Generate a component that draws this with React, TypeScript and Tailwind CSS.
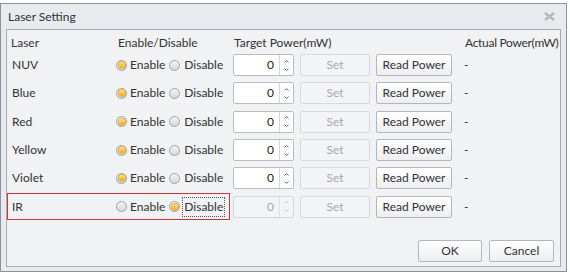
import React from "react";

const lasers = ["NUV", "Blue", "Red", "Yellow", "Violet", "IR"];

function Radio({ checked }: { checked: boolean }) {
  return (
    <span className="flex h-[11px] w-[11px] items-center justify-center rounded-full border border-[#9ea3a9] bg-gradient-to-b from-[#f3f4f6] to-[#d4d7db]">
      {checked && (
        <span className="h-[6px] w-[6px] rounded-full bg-gradient-to-b from-[#fde17a] to-[#f0a818] ring-1 ring-[#e8b040]" />
      )}
    </span>
  );
}

function SpinBox({ disabled }: { disabled?: boolean }) {
  return (
    <div
      className={
        "flex h-[22px] w-[61px] rounded-[2px] border " +
        (disabled ? "border-[#d3d6da] bg-[#f3f4f6]" : "border-[#b9bdc2] bg-white")
      }
    >
      <div
        className={
          "flex flex-1 items-center justify-end pr-[5px] " + (disabled ? "text-[#a6a6a6]" : "text-[#222]")
        }
      >
        0
      </div>
      <div
        className={
          "flex w-[14px] flex-col items-center justify-center gap-[5px] border-l " +
          (disabled ? "border-[#dcdfe3]" : "border-[#d3d6da]")
        }
      >
        <svg width="5" height="3" viewBox="0 0 5 3">
          <path d="M0.5 2.5 L2.5 0.5 L4.5 2.5" fill="none" stroke={disabled ? "#c4c4c4" : "#666"} strokeWidth="1" />
        </svg>
        <svg width="5" height="3" viewBox="0 0 5 3">
          <path d="M0.5 0.5 L2.5 2.5 L4.5 0.5" fill="none" stroke={disabled ? "#c4c4c4" : "#666"} strokeWidth="1" />
        </svg>
      </div>
    </div>
  );
}

function Button({ label, disabled, w }: { label: string; disabled?: boolean; w: string }) {
  return (
    <div
      className={
        "flex h-[22px] items-center justify-center rounded-[2px] border " +
        w +
        " " +
        (disabled
          ? "border-[#d6d9dd] bg-[#f3f4f6] text-[#a9a9a9]"
          : "border-[#b3b7bd] bg-gradient-to-b from-[#ffffff] to-[#eceef1] text-[#333]")
      }
    >
      {label}
    </div>
  );
}

export default function App() {
  return (
    <div
      className="h-[276px] w-[570px] bg-white pt-[3px] text-[12px] text-[#333]"
      style={{ fontFamily: 'Lato, "Noto Sans", sans-serif' }}
    >
      <div className="flex h-[269px] w-[567px] flex-col border border-[#8e9298] bg-[#e7eaee] px-[5px] pb-[4px]">
        <div className="flex h-[25px] items-center justify-between pl-[2px] pr-[6px] text-[#333]">
          <span>Laser Setting</span>
          <svg width="11" height="9" viewBox="0 0 11 9">
            <path d="M1 1 L10 8 M10 1 L1 8" stroke="#8a8a8a" strokeWidth="2.2" />
            <path d="M1 1 L10 8 M10 1 L1 8" stroke="#f4f4f4" strokeWidth="0.8" />
          </svg>
        </div>
        <div className="flex flex-1 flex-col border border-[#a7abb1] bg-[#f0f2f4] pt-[4px]">
          <div className="flex h-[17px] items-center whitespace-nowrap">
            <span className="w-[111px] shrink-0 pl-[4px]">Laser</span>
            <span className="w-[116px] shrink-0">Enable/Disable</span>
            <span className="w-[231px] shrink-0">Target Power(mW)</span>
            <span className="shrink-0 tracking-[-0.3px]">Actual Power(mW)</span>
          </div>
          {lasers.map((name) => {
            const ir = name === "IR";
            return (
              <div key={name} className="flex h-[28.3px] items-center whitespace-nowrap">
                <div
                  className={
                    "flex h-[27px] w-[223px] shrink-0 items-center border border-transparent " +
                    (ir ? "outline outline-1 -outline-offset-1 outline-[#d2333c]" : "")
                  }
                >
                  <span className="w-[108px] pl-[4px]">{name}</span>
                  <span className="flex items-center gap-[3px]">
                    <Radio checked={!ir} />
                    <span className="mr-[1px]">Enable</span>
                    <Radio checked={ir} />
                    <span
                      className={
                        "px-[1px] " + (ir ? "outline outline-1 outline-dotted outline-[#555]" : "")
                      }
                    >
                      Disable
                    </span>
                  </span>
                </div>
                <div className="ml-[3px] flex shrink-0 items-center gap-[6px]">
                  <SpinBox disabled={ir} />
                  <Button label="Set" disabled w="w-[70px]" />
                  <Button label="Read Power" w="w-[76px]" />
                </div>
                <span className="ml-[12px]">-</span>
              </div>
            );
          })}
          <div className="mt-auto flex justify-end gap-[7px] pb-[4px] pr-[6px]">
            <Button label="OK" w="w-[64px]" />
            <Button label="Cancel" w="w-[65px]" />
          </div>
        </div>
      </div>
    </div>
  );
}
